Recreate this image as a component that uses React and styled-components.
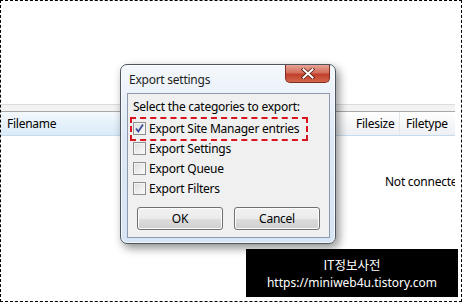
import React from 'react'
import styled, { createGlobalStyle } from 'styled-components'

const GlobalStyle = createGlobalStyle`
  html, body {
    margin: 0;
    padding: 0;
    background: #fff;
  }
  body {
    font-family: "Noto Sans", "Open Sans", sans-serif;
    font-size: 12px;
    letter-spacing: -0.25px;
    color: #000;
  }
`

const Shot = styled.div`
  position: relative;
  width: 462px;
  height: 302px;
  box-sizing: border-box;
  border: 1px dashed #000;
  background: #fff;
  overflow: hidden;
`

const Pane = styled.div`
  margin-top: 103px;
  margin-right: 6px;
`

const Splitter = styled.div`
  height: 6px;
  border-top: 1px solid #dcdcdc;
  background: #f3f3f3;
  border-bottom: 1px solid #a9a9a9;
`

const HeaderRow = styled.div`
  display: flex;
  height: 23px;
  border-bottom: 1px solid #c5dcef;
  background: linear-gradient(#ffffff, #f6f7f9 50%, #eef0f3);
`

const HeaderCell = styled.div`
  display: flex;
  align-items: center;
  box-sizing: border-box;
  padding: 0 6px;
  flex: ${p => (p.$grow ? 1 : 'none')};
  width: ${p => (p.$w ? `${p.$w}px` : 'auto')};
  border-left: ${p => (p.$sep ? '1px solid #e3e6ea' : 'none')};
  background: ${p => (p.$hot ? 'linear-gradient(#f4f9fd, #e6f1fb 50%, #d9ebf8)' : 'transparent')};
  white-space: nowrap;
`

const ListBody = styled.div`
  padding: 37px 0 0 384px;
  white-space: nowrap;
  overflow: hidden;
`

const Dialog = styled.div`
  position: absolute;
  left: 119px;
  top: 63px;
  width: 216px;
  height: 180px;
  box-sizing: border-box;
  border: 1px solid #4d5560;
  border-radius: 7px;
  background: linear-gradient(#f4f8fc, #dfe9f5 40%, #d7e4f3);
  box-shadow: 3px 4px 10px rgba(0, 0, 0, 0.45), inset 0 0 0 1px rgba(255, 255, 255, 0.7);
  display: flex;
  flex-direction: column;
`

const TitleBar = styled.div`
  display: flex;
  align-items: flex-start;
  justify-content: space-between;
  height: 28px;
  padding-left: 8px;
`

const Title = styled.span`
  margin-top: 6px;
  color: #1e1e1e;
`

const CloseButton = styled.div`
  width: 45px;
  height: 18px;
  margin-right: 5px;
  box-sizing: border-box;
  border: 1px solid #7b2e22;
  border-top: none;
  border-radius: 0 0 5px 5px;
  background: linear-gradient(#e7a293, #d46f5c 45%, #c0402c 55%, #d5654a);
  display: flex;
  align-items: center;
  justify-content: center;
`

const Client = styled.div`
  flex: 1;
  margin: 0 5px 5px 6px;
  border: 1px solid #8b9aae;
  background: #f0f0f0;
  padding: 5px 0 0 5px;
  display: flex;
  flex-direction: column;
`

const Prompt = styled.div`
  height: 16px;
  line-height: 16px;
  margin-bottom: 3px;
`

const Option = styled.label`
  display: flex;
  align-items: center;
  gap: 3px;
  height: 20px;
`

const Box = styled.span`
  width: 13px;
  height: 13px;
  box-sizing: border-box;
  border: 1px solid #8e8f8f;
  background: linear-gradient(135deg, #dcdcdc, #fbfbfb);
  box-shadow: inset 0 0 0 1px #f4f4f4;
  display: flex;
  align-items: center;
  justify-content: center;
`

const Buttons = styled.div`
  display: flex;
  gap: 11px;
  margin-top: 9px;
  padding-left: 4px;
`

const Button = styled.div`
  width: 86px;
  height: 23px;
  box-sizing: border-box;
  border: 1px solid #707070;
  border-radius: 3px;
  background: linear-gradient(#f2f2f2, #ebebeb 50%, #dddddd 51%, #cfcfcf);
  box-shadow: inset 0 0 0 1px #fcfcfc;
  display: flex;
  align-items: center;
  justify-content: center;
`

const Highlight = styled.div`
  position: absolute;
  left: 129px;
  top: 116px;
  width: 178px;
  height: 24px;
  box-sizing: border-box;
  border: 2px dashed #d9141e;
`

const Watermark = styled.div`
  position: absolute;
  left: 245px;
  top: 248px;
  width: 212px;
  height: 48px;
  background: #000;
  color: #fff;
  display: flex;
  flex-direction: column;
  align-items: center;
  justify-content: center;
  gap: 3px;
  font-size: 12px;
  line-height: 15px;
  letter-spacing: 0;
`

const Brand = styled.span`
  font-family: "Noto Sans CJK KR", "Noto Sans", sans-serif;
  font-size: 12.5px;
`

function Check() {
  return (
    <svg width="11" height="11" viewBox="0 0 11 11">
      <path d="M2 5.5 L4.3 8.5 L9 1.5" fill="none" stroke="#3a4f9a" strokeWidth="1.8" />
    </svg>
  )
}

function CloseGlyph() {
  return (
    <svg width="14" height="11" viewBox="0 0 14 11">
      <path d="M2.5 1.5 L11.5 9.5 M11.5 1.5 L2.5 9.5" stroke="#5a1a12" strokeWidth="3.6" strokeLinecap="square" />
      <path d="M2.5 1.5 L11.5 9.5 M11.5 1.5 L2.5 9.5" stroke="#fff" strokeWidth="2" strokeLinecap="square" />
    </svg>
  )
}

const options = [
  { label: 'Export Site Manager entries', checked: true },
  { label: 'Export Settings', checked: false },
  { label: 'Export Queue', checked: false },
  { label: 'Export Filters', checked: false },
]

export default function App() {
  return (
    <>
      <GlobalStyle />
      <Shot>
        <Pane>
          <Splitter />
          <HeaderRow>
            <HeaderCell $hot $w={120}>Filename</HeaderCell>
            <HeaderCell $grow />
            <HeaderCell $w={49}>Filesize</HeaderCell>
            <HeaderCell $sep $w={56}>Filetype</HeaderCell>
          </HeaderRow>
          <ListBody>Not connected to any server</ListBody>
        </Pane>

        <Dialog>
          <TitleBar>
            <Title>Export settings</Title>
            <CloseButton>
              <CloseGlyph />
            </CloseButton>
          </TitleBar>
          <Client>
            <Prompt>Select the categories to export:</Prompt>
            {options.map(o => (
              <Option key={o.label}>
                <Box>{o.checked && <Check />}</Box>
                {o.label}
              </Option>
            ))}
            <Buttons>
              <Button>OK</Button>
              <Button>Cancel</Button>
            </Buttons>
          </Client>
        </Dialog>
        <Highlight />

        <Watermark>
          <Brand>IT정보사전</Brand>
          <span>https://miniweb4u.tistory.com</span>
        </Watermark>
      </Shot>
    </>
  )
}
